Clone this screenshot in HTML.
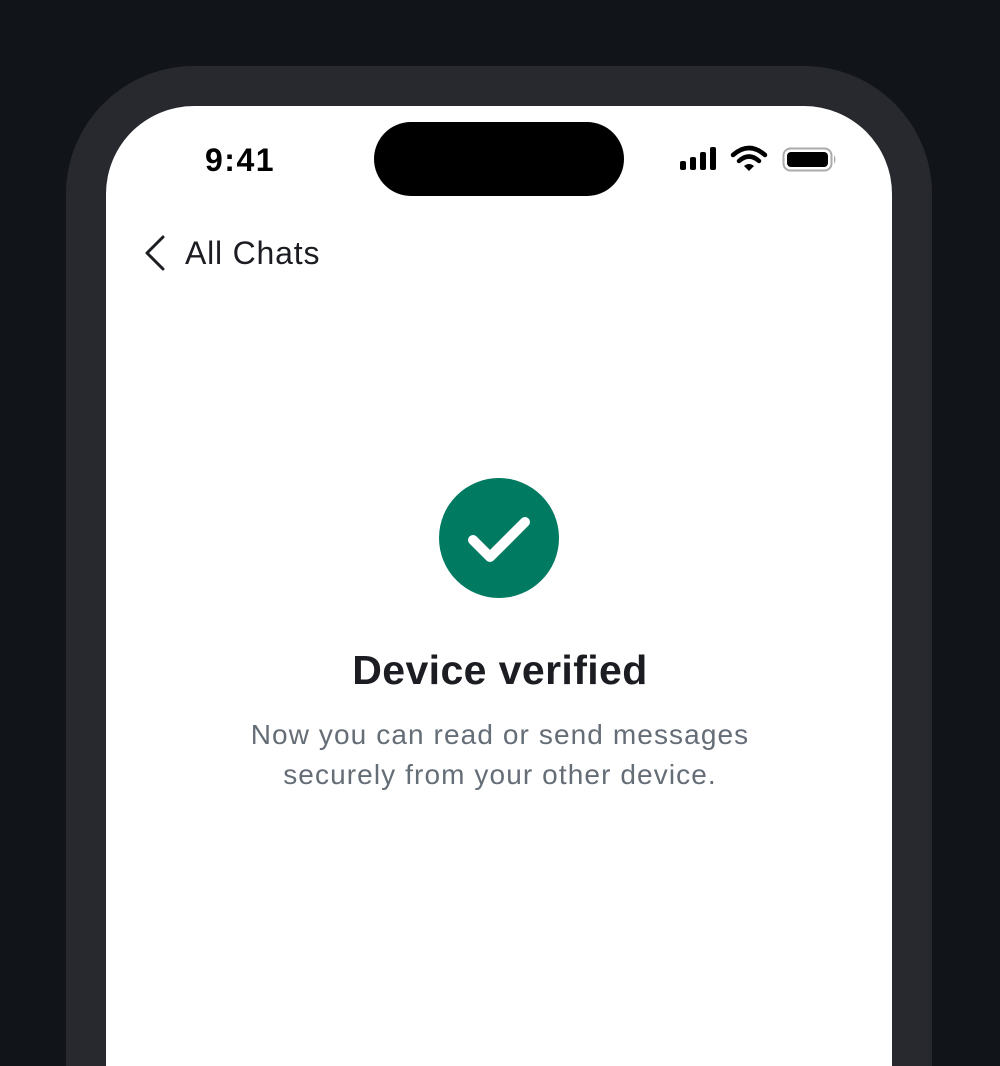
<!DOCTYPE html>
<html><head><style>
body{margin:0;width:1000px;height:1000px;background:#111418;overflow:hidden;position:relative;font-family:"Liberation Sans",sans-serif}
.frame{position:absolute;left:66px;top:66px;width:866px;height:1000px;background:#28292e;border-radius:128px 128px 0 0}
.screen{position:absolute;left:106px;top:106px;width:786px;height:960px;background:#fff;border-radius:88px 88px 0 0}
.island{position:absolute;left:374px;top:122px;width:250px;height:74px;background:#000;border-radius:37px}
.time{position:absolute;left:205px;top:142px;font-size:32px;letter-spacing:1.5px;font-weight:bold;color:#000}
.back{position:absolute;left:185px;top:235px;font-size:32px;letter-spacing:0.8px;color:#1b1d22}
h1{position:absolute;left:0;width:1000px;top:647px;margin:0;text-align:center;font-size:41px;letter-spacing:0.4px;font-weight:bold;color:#1b1d22}
p{position:absolute;left:0;width:1000px;top:715px;margin:0;text-align:center;font-size:28px;letter-spacing:1.1px;line-height:40px;color:#656d77}
</style></head><body>
<div class="frame"></div><div class="screen"></div><div class="island"></div>
<div class="time">9:41</div>
<svg style="position:absolute;left:0;top:0" width="1000" height="1000">
<g fill="#000">
<rect x="680" y="161" width="6" height="9" rx="2"/>
<rect x="690" y="157" width="6" height="13" rx="2"/>
<rect x="700" y="152" width="6" height="18" rx="2"/>
<rect x="710" y="147" width="6" height="23" rx="2"/>
</g>
<g fill="none" stroke="#000" stroke-width="4.5" stroke-linecap="round">
<path d="M733 155 Q749 141 765 155"/>
<path d="M739 161 Q749 152 759 161"/>
</g>
<path d="M744 166 L749 171 L754 166 Q749 162 744 166Z" fill="#000"/>
<rect x="783.5" y="148.5" width="48" height="22" rx="7" fill="none" stroke="#aaa" stroke-width="2"/>
<rect x="787" y="152" width="41" height="15" rx="4" fill="#000"/>
<path d="M834 155 Q837 159.5 834 164Z" fill="#aaa"/>
<path d="M163 237 L147 253 L163 269" fill="none" stroke="#1b1d22" stroke-width="3" stroke-linecap="round" stroke-linejoin="round"/>
<circle cx="499" cy="538" r="60" fill="#007a61"/>
<path d="M473 540 L490 557 L525 522" fill="none" stroke="#fff" stroke-width="10" stroke-linecap="round" stroke-linejoin="round"/>
</svg>
<div class="back">All Chats</div>
<h1>Device verified</h1>
<p>Now you can read or send messages<br>securely from your other device.</p>
</body></html>
